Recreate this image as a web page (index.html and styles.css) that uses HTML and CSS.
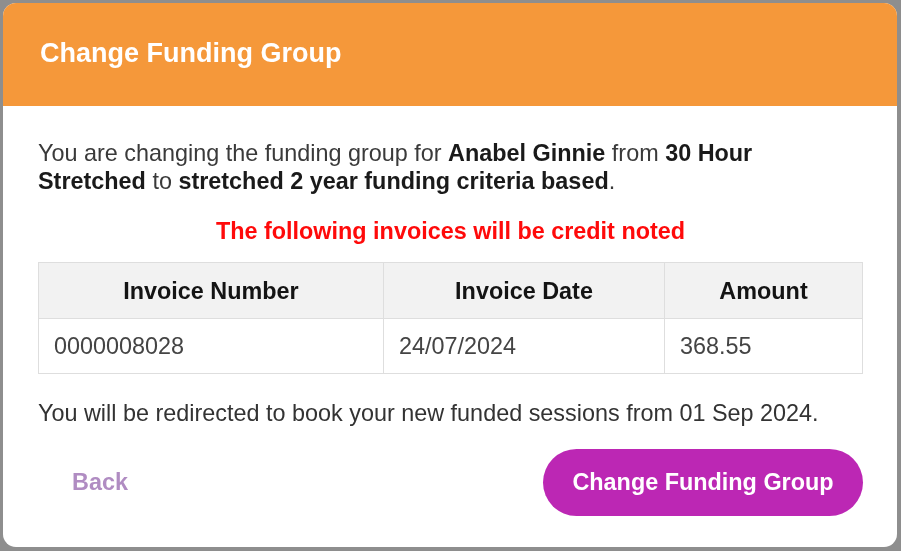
FILE: index.html
```html
<!DOCTYPE html>
<html lang="en">
<head>
  <meta charset="UTF-8">
  <meta name="viewport" content="width=device-width, initial-scale=1.0">
  <title>Change Funding Group</title>
  <link rel="stylesheet" href="styles.css">
</head>
<body>

  <!-- Page behind the dialog -->
  <div class="page">
    <div class="pageTitle">Account Information</div>
  </div>

  <!-- Change funding group dialog -->
  <div class="overlay">
    <div class="modal">
      <div class="modalHeader">
        <h1>Change Funding Group</h1>
      </div>

      <div class="modalBody">
        <p class="intro">
          You are changing the funding group for <strong>Anabel Ginnie</strong> from <strong>30 Hour Stretched</strong> to <strong>stretched 2 year funding criteria based</strong>.
        </p>

        <p class="warning">The following invoices will be credit noted</p>

        <table class="invoiceTable">
          <thead>
            <tr>
              <th class="colNumber">Invoice Number</th>
              <th class="colDate">Invoice Date</th>
              <th>Amount</th>
            </tr>
          </thead>
          <tbody>
            <tr>
              <td>0000008028</td>
              <td>24/07/2024</td>
              <td>368.55</td>
            </tr>
          </tbody>
        </table>

        <p class="redirect">You will be redirected to book your new funded sessions from 01 Sep 2024.</p>

        <div class="actions">
          <button class="backBtn">Back</button>
          <button class="confirmBtn">Change Funding Group</button>
        </div>
      </div>
    </div>
  </div>

</body>
</html>
```

FILE: styles.css
```css
/* Page behind the dialog */
body {
  font-family: 'Liberation Sans', Arial, sans-serif;
  margin: 0;
  padding: 0;
  background: #8e8e8e;
  color: #333;
  height: 100vh;
  overflow: hidden;
}

.page {
  display: flex;
  justify-content: flex-end;
  padding-right: 45px;
}

.pageTitle {
  margin-top: -17px;
  font-size: 20px;
  line-height: 20px;
  color: #3a3a3a;
}

/* Dialog */
.overlay {
  position: fixed;
  top: 0;
  left: 0;
  right: 0;
  bottom: 0;
  padding: 3px 0 0 3px;
}

.modal {
  width: 894px;
  height: 544px;
  background: #fff;
  border-radius: 13px;
  overflow: hidden;
  display: flex;
  flex-direction: column;
}

.modalHeader {
  background: #f5983a;
  height: 103px;
  padding: 0 37px 2px;
  box-sizing: border-box;
  display: flex;
  align-items: center;
}

.modalHeader h1 {
  margin: 0;
  font-size: 27px;
  font-weight: 700;
  color: #fff;
}

.modalBody {
  padding: 33px 34px 0 35px;
  font-size: 23.4px;
  line-height: 28px;
}

p {
  margin: 0;
}

.intro {
  color: #3a3a3a;
}

.intro strong {
  color: #1a1a1a;
}

.warning {
  margin-top: 22px;
  text-align: center;
  font-weight: 700;
  color: #ff0a0a;
}

/* Invoice table */
.invoiceTable {
  width: 100%;
  margin-top: 17px;
  border-collapse: collapse;
  font-size: 23.4px;
}

.invoiceTable th,
.invoiceTable td {
  border: 1px solid #dedede;
  padding: 0 15px;
}

.invoiceTable th {
  height: 55px;
  background: #f2f2f2;
  font-weight: 700;
  color: #141414;
  text-align: center;
}

.invoiceTable td {
  height: 54px;
  color: #444;
  text-align: left;
}

.colNumber {
  width: 314px;
}

.colDate {
  width: 250px;
}

.redirect {
  margin-top: 25px;
  color: #333;
}

/* Buttons */
.actions {
  margin-top: 22px;
  display: flex;
  justify-content: space-between;
  align-items: center;
}

button {
  font-family: inherit;
  font-size: 23.4px;
  font-weight: 700;
  border: none;
  cursor: pointer;
  height: 67px;
  border-radius: 34px;
}

.backBtn {
  background: none;
  color: #b08cc2;
  padding: 0 34px;
}

.confirmBtn {
  background: #bc27b4;
  color: #fff;
  padding: 0 29px;
  width: 320px;
}
```
